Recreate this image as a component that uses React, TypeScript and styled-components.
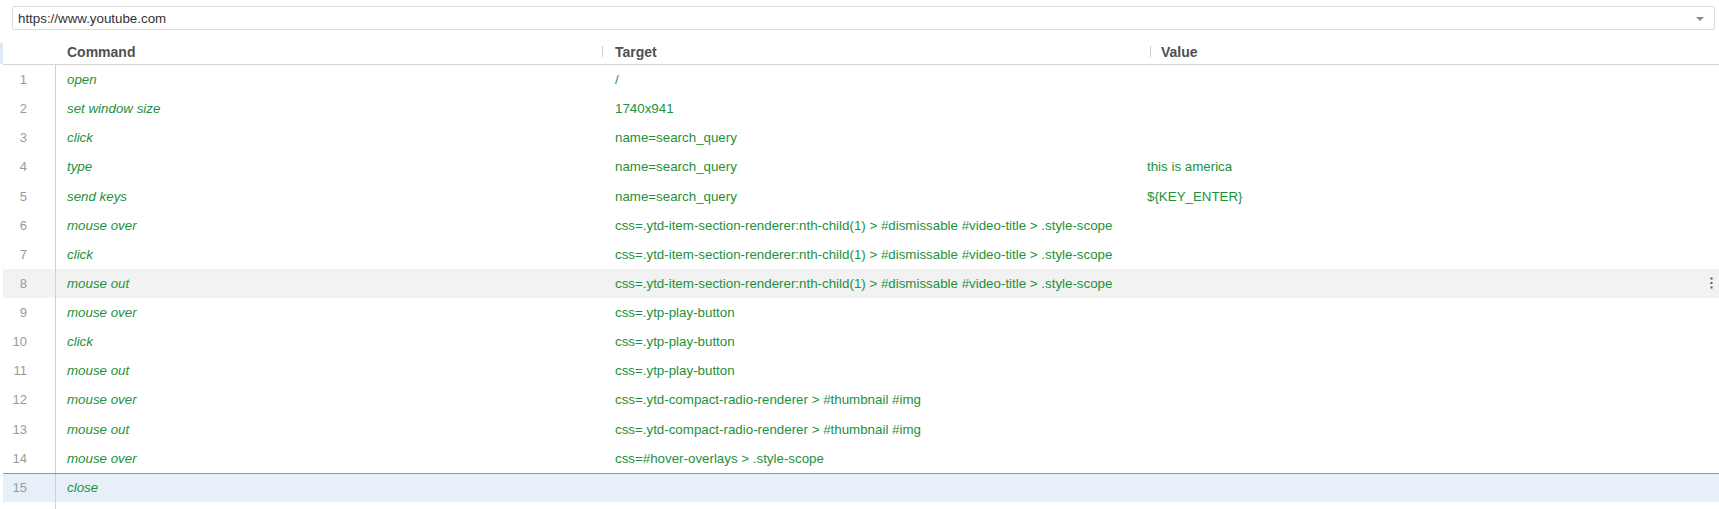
import * as React from 'react';
import styled, { createGlobalStyle } from 'styled-components';

const GlobalStyle = createGlobalStyle`
  html, body {
    margin: 0;
    padding: 0;
    background: #fff;
    overflow: hidden;
  }
  body {
    font-family: "Liberation Sans", Arial, sans-serif;
  }
`;

const Page = styled.div`
  display: flex;
  width: 1719px;
  height: 509px;
  overflow: hidden;
`;

const Strip = styled.div`
  width: 3px;
  flex: none;
  padding-top: 43px;
`;

const StripMark = styled.div`
  height: 21px;
  background: #dfe9f5;
`;

const Main = styled.div`
  flex: 1;
  display: flex;
  flex-direction: column;
  min-width: 0;
`;

const UrlBox = styled.div`
  margin: 6px 4px 0 9px;
  height: 24px;
  box-sizing: border-box;
  border: 1px solid #dcdcdc;
  border-radius: 2px;
  display: flex;
  align-items: center;
  padding: 0 10px 0 5px;
  font-size: 13.33px;
  color: #333;
`;

const UrlText = styled.span`
  flex: 1;
`;

const Caret = styled.span`
  width: 0;
  height: 0;
  border-left: 4px solid transparent;
  border-right: 4px solid transparent;
  border-top: 4px solid #8a8a8a;
  margin-top: 1px;
`;

const HeaderRow = styled.div`
  display: grid;
  grid-template-columns: 53px 546px 548px 1fr;
  height: 35px;
  box-sizing: border-box;
  border-bottom: 1px solid #d3d3d3;
`;

const HeadCell = styled.div<{ $pad: number }>`
  display: flex;
  align-items: flex-end;
  padding-bottom: 4px;
  font-size: 14px;
  line-height: 16px;
  font-weight: bold;
  color: #505050;
  span {
    margin-left: ${p => p.$pad}px;
  }
`;

const Sep = styled.i`
  width: 1px;
  height: 11px;
  margin-bottom: 3px;
  background: #cfcfcf;
`;

const Row = styled.div<{ $state?: 'hover' | 'current' }>`
  display: grid;
  grid-template-columns: 53px 546px 534px 1fr;
  height: 29.14px;
  box-sizing: border-box;
  font-size: 13.33px;
  align-items: center;
  background: ${p =>
    p.$state === 'hover' ? '#f2f2f2' : p.$state === 'current' ? '#e7eff8' : 'transparent'};
  border-top: ${p => (p.$state === 'current' ? '1px solid #6d9be3' : 'none')};
`;

const Num = styled.div`
  height: 100%;
  box-sizing: border-box;
  border-right: 1px solid #d0d0d0;
  display: flex;
  align-items: center;
  justify-content: flex-end;
  padding-right: 28px;
  font-size: 13px;
  color: #9a9a9a;
`;

const Cmd = styled.div`
  padding-left: 11px;
  font-style: italic;
  color: #1d913c;
  white-space: nowrap;
`;

const Txt = styled.div<{ $pad: number }>`
  padding-left: ${p => p.$pad}px;
  color: #1d913c;
  white-space: nowrap;
  display: flex;
  align-items: center;
`;

const Kebab = styled.svg`
  margin-left: auto;
  margin-right: 6px;
`;

const Filler = styled.div`
  flex: 1;
  display: grid;
  grid-template-columns: 53px 1fr;
`;

const commands: [string, string, string][] = [
  ['open', '/', ''],
  ['set window size', '1740x941', ''],
  ['click', 'name=search_query', ''],
  ['type', 'name=search_query', 'this is america'],
  ['send keys', 'name=search_query', '${KEY_ENTER}'],
  ['mouse over', 'css=.ytd-item-section-renderer:nth-child(1) > #dismissable #video-title > .style-scope', ''],
  ['click', 'css=.ytd-item-section-renderer:nth-child(1) > #dismissable #video-title > .style-scope', ''],
  ['mouse out', 'css=.ytd-item-section-renderer:nth-child(1) > #dismissable #video-title > .style-scope', ''],
  ['mouse over', 'css=.ytp-play-button', ''],
  ['click', 'css=.ytp-play-button', ''],
  ['mouse out', 'css=.ytp-play-button', ''],
  ['mouse over', 'css=.ytd-compact-radio-renderer > #thumbnail #img', ''],
  ['mouse out', 'css=.ytd-compact-radio-renderer > #thumbnail #img', ''],
  ['mouse over', 'css=#hover-overlays > .style-scope', ''],
  ['close', '', ''],
];

export default function App() {
  return (
    <Page>
      <GlobalStyle />
      <Strip>
        <StripMark />
      </Strip>
      <Main>
        <UrlBox>
          <UrlText>https://www.youtube.com</UrlText>
          <Caret />
        </UrlBox>
        <HeaderRow>
          <HeadCell $pad={0} />
          <HeadCell $pad={11}>
            <span>Command</span>
          </HeadCell>
          <HeadCell $pad={12}>
            <Sep />
            <span>Target</span>
          </HeadCell>
          <HeadCell $pad={10}>
            <Sep />
            <span>Value</span>
          </HeadCell>
        </HeaderRow>
        {commands.map(([cmd, target, value], i) => {
          const state = i === 7 ? 'hover' : i === 14 ? 'current' : undefined;
          return (
            <Row key={i} $state={state}>
              <Num>{i + 1}</Num>
              <Cmd>{cmd}</Cmd>
              <Txt $pad={13}>{target}</Txt>
              <Txt $pad={11}>
                {value}
                {state === 'hover' && (
                  <Kebab width="3" height="12" viewBox="0 0 3 12">
                    <rect x="0.5" y="0.5" width="2" height="2" fill="#555" />
                    <rect x="0.5" y="5" width="2" height="2" fill="#555" />
                    <rect x="0.5" y="9.5" width="2" height="2" fill="#555" />
                  </Kebab>
                )}
              </Txt>
            </Row>
          );
        })}
        <Filler>
          <Num />
        </Filler>
      </Main>
    </Page>
  );
}
